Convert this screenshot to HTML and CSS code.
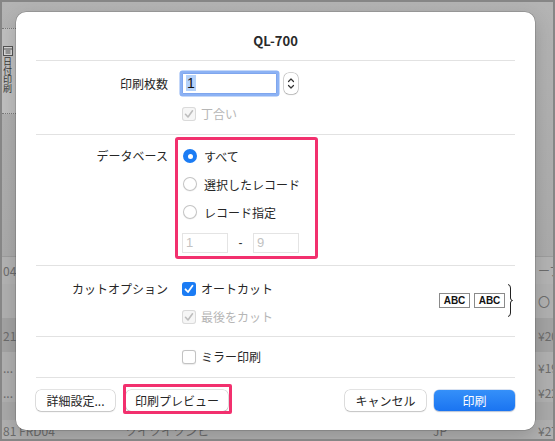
FILE: index.html
```html
<!DOCTYPE html>
<html lang="ja">
<head>
<meta charset="utf-8">
<title>QL-700</title>
<link rel="stylesheet" href="styles.css">
</head>
<body>
<div class="screen">
  <div class="bg">
    <div class="bg-top">
      <div class="bg-side">
        <div class="side-panel">
          <svg class="side-icon" width="10" height="10" viewBox="0 0 10 10"><rect x="0.5" y="0.5" width="9" height="9" fill="#d8d8d8" stroke="#555"/><path d="M0.5 3h9M2.5 5h5M2.5 7h5" stroke="#555" stroke-width="1"/></svg>
          <span class="vtext">日付印刷</span>
        </div>
      </div>
    </div>
    <div class="bg-row r1"><span>04</span><span></span><span></span><span>ープ</span></div>
    <div class="bg-row r2"><span></span><span></span><span></span><span>〇 会</span></div>
    <div class="bg-row r3"><span>21</span><span></span><span></span><span>¥20</span></div>
    <div class="bg-row r4"><span>...</span><span></span><span></span><span>¥19</span></div>
    <div class="bg-row r5"><span>...</span><span></span><span></span><span>¥22</span></div>
    <div class="bg-row r6"></div>
    <div class="bg-row r7"><span>81 FRD04</span><span>ツイツイツンヒ</span><span>JP</span><span>¥27</span></div>
  </div>

  <div class="dialog">
    <h1 class="title">QL-700</h1>

    <section class="sec sec-copies">
      <div class="label">印刷枚数</div>
      <div class="ctrl">
        <div class="copies">
          <div class="num-field"><span class="sel">1</span></div>
          <div class="stepper">
            <svg width="14" height="21" viewBox="0 0 14 21"><path d="M4.5 8.5 L7 6 L9.5 8.5" fill="none" stroke="#333" stroke-width="1.2" stroke-linecap="round" stroke-linejoin="round"/><path d="M4.5 12.5 L7 15 L9.5 12.5" fill="none" stroke="#333" stroke-width="1.2" stroke-linecap="round" stroke-linejoin="round"/></svg>
          </div>
        </div>
        <div class="check disabled">
          <span class="box on-dis"><svg width="14" height="14" viewBox="0 0 14 14"><path d="M3.5 7.3 L6 10 L10.5 3.8" fill="none" stroke="#bdbdbd" stroke-width="1.6" stroke-linecap="round" stroke-linejoin="round"/></svg></span>
          <span class="txt">丁合い</span>
        </div>
      </div>
    </section>

    <section class="sec sec-db">
      <div class="label">データベース</div>
      <div class="radio-group">
        <div class="radio"><span class="dot on"></span><span class="txt">すべて</span></div>
        <div class="radio"><span class="dot"></span><span class="txt">選択したレコード</span></div>
        <div class="radio"><span class="dot"></span><span class="txt">レコード指定</span></div>
        <div class="range">
          <span class="mini-field">1</span>
          <span class="dash">-</span>
          <span class="mini-field">9</span>
        </div>
      </div>
    </section>

    <section class="sec sec-cut">
      <div class="label">カットオプション</div>
      <div class="ctrl">
        <div class="check">
          <span class="box on"><svg width="14" height="14" viewBox="0 0 14 14"><path d="M3.5 7.3 L6 10 L10.5 3.8" fill="none" stroke="#fff" stroke-width="1.8" stroke-linecap="round" stroke-linejoin="round"/></svg></span>
          <span class="txt">オートカット</span>
        </div>
        <div class="check disabled">
          <span class="box on-dis"><svg width="14" height="14" viewBox="0 0 14 14"><path d="M3.5 7.3 L6 10 L10.5 3.8" fill="none" stroke="#bdbdbd" stroke-width="1.6" stroke-linecap="round" stroke-linejoin="round"/></svg></span>
          <span class="txt">最後をカット</span>
        </div>
      </div>
      <div class="illus">
        <span class="abc">ABC</span>
        <span class="abc">ABC</span>
        <svg class="brace" width="6" height="33" viewBox="0 0 6 33"><path d="M1 0.5 Q3.5 0.8 3.5 4 L3.5 14 Q3.5 16.3 5.5 16.5 Q3.5 16.7 3.5 19 L3.5 29 Q3.5 32.2 1 32.5" fill="none" stroke="#222" stroke-width="1"/></svg>
      </div>
    </section>

    <section class="sec sec-mirror">
      <div class="label"></div>
      <div class="ctrl">
        <div class="check">
          <span class="box"></span>
          <span class="txt">ミラー印刷</span>
        </div>
      </div>
    </section>

    <footer class="footer">
      <button class="btn btn-detail">詳細設定...</button>
      <button class="btn btn-preview">印刷プレビュー</button>
      <span class="spacer"></span>
      <button class="btn btn-cancel">キャンセル</button>
      <button class="btn btn-print">印刷</button>
    </footer>
  </div>
</div>
</body>
</html>
```

FILE: styles.css
```css
* { box-sizing: border-box; }
html, body { margin: 0; padding: 0; }
body {
  width: 555px;
  height: 441px;
  overflow: hidden;
  background: #858585;
  font-family: "Noto Sans CJK JP", "Noto Sans", sans-serif;
}

.screen {
  position: relative;
  width: 555px;
  height: 441px;
  border: 2px solid #868686;
  background: #adadad;
  overflow: hidden;
}

/* ---------- background window (dimmed) ---------- */
.bg {
  display: flex;
  flex-direction: column;
  height: 100%;
}
.bg-top {
  height: 254px;
  display: flex;
  background: linear-gradient(#b4b4b4, #ababab);
}
.bg-side {
  width: 14px;
  padding-top: 26px;
}
.side-panel {
  height: 86px;
  background: #c0c0c0;
  border-top: 1px dotted #7a7a7a;
  border-bottom: 1px dotted #7a7a7a;
  padding: 17px 0 0 1px;
  display: flex;
  flex-direction: column;
  align-items: flex-start;
  overflow: hidden;
}
.side-icon { display: block; }
.vtext {
  writing-mode: vertical-rl;
  font-size: 9px;
  line-height: 9px;
  color: #3a3a3a;
  margin-top: 1px;
}

.bg-row {
  display: grid;
  grid-template-columns: 122px 308px 105px 1fr;
  align-items: center;
  font-size: 12px;
  color: #6c6c6c;
  white-space: nowrap;
  overflow: hidden;
  background: #b0b0b0;
}
.bg-row span { padding-left: 1px; overflow: hidden; }
.r1 { height: 28px; border-top: 1px solid #9d9d9d; background: #b3b3b3; }
.r2 { height: 34px; }
.r3 { height: 34px; background: #a3a3a3; }
.r4 { height: 30px; }
.r5 { height: 20px; }
.r6 { height: 18px; background: #a9a9a9; }
.r7 { height: 19px; align-items: end; }

/* ---------- dialog ---------- */
.dialog {
  position: absolute;
  left: 14px;
  top: 10px;
  width: 519px;
  height: 418px;
  background: #ffffff;
  border-radius: 10px;
  box-shadow: 0 0 0 0.5px rgba(0,0,0,0.25), 0 6px 20px rgba(0,0,0,0.18);
  display: flex;
  flex-direction: column;
  color: #262626;
  font-size: 12px;
}

.title {
  margin: 0 20px;
  padding: 21px 0 11px;
  font-size: 13px;
  line-height: 16px;
  font-weight: bold;
  text-align: center;
  color: #2a2a2a;
  border-bottom: 1px solid #e2e2e2;
}

.sec {
  margin: 0 20px;
  display: grid;
  grid-template-columns: 132px 1fr;
  column-gap: 14px;
  border-bottom: 1px solid #e2e2e2;
}
.label {
  text-align: right;
  line-height: 18px;
  color: #262626;
}
.ctrl {
  display: flex;
  flex-direction: column;
  gap: 10px;
  align-items: flex-start;
}

/* copies */
.sec-copies { padding: 10px 0 12px; }
.sec-copies .label { line-height: 25px; }
.copies {
  height: 25px;
  display: flex;
  align-items: center;
}
.num-field {
  width: 95px;
  height: 21px;
  border: 1px solid #7fa6ee;
  box-shadow: 0 0 0 2.5px #8cb2f4;
  border-radius: 1px;
  background: #fff;
  padding: 2px 0 0 3px;
  font-family: "Liberation Sans", "Noto Sans", sans-serif;
  font-size: 14px;
  line-height: 15px;
  color: #111;
}
.sel { background: #b5d2fa; padding: 0 1px; }
.stepper {
  margin-left: 7px;
  width: 14px;
  height: 21px;
  border-radius: 5px;
  background: #fff;
  box-shadow: 0 0 0 0.5px rgba(0,0,0,0.3), 0 0.5px 1.5px rgba(0,0,0,0.2);
}
.stepper svg { display: block; }

/* checkbox */
.check {
  height: 16px;
  display: flex;
  align-items: center;
  gap: 5px;
}
.box {
  width: 14px;
  height: 14px;
  border-radius: 3px;
  background: #fff;
  box-shadow: inset 0 0 0 1px #c3c3c3, 0 0.5px 1px rgba(0,0,0,0.08);
  display: block;
}
.box svg { display: block; }
.box.on { background: #1b7cf4; box-shadow: none; }
.box.on-dis { background: #f6f6f6; box-shadow: inset 0 0 0 1px #dadada; }
.check .txt { line-height: 18px; }
.check.disabled .txt { color: #b6b6b6; }
.sec-cut .check, .sec-mirror .check { height: 18px; }

/* database */
.sec-db { padding: 12px 0 12px; }
.radio-group {
  position: relative;
  justify-self: start;
  width: 118px;
  display: flex;
  flex-direction: column;
  gap: 10px;
}
.radio-group::after {
  content: "";
  position: absolute;
  left: -7px;
  right: -18px;
  top: -10px;
  bottom: -6px;
  border: 3px solid #f2306e;
  border-radius: 3px;
  pointer-events: none;
}
.radio {
  height: 18px;
  display: flex;
  align-items: center;
  gap: 7px;
  padding-left: 1px;
  white-space: nowrap;
}
.dot {
  width: 14px;
  height: 14px;
  border-radius: 50%;
  background: #fff;
  box-shadow: inset 0 0 0 1px #c3c3c3, 0 0.5px 1px rgba(0,0,0,0.08);
  display: block;
  position: relative;
}
.dot.on { background: #1b7cf4; box-shadow: none; }
.dot.on::after {
  content: "";
  position: absolute;
  left: 4.5px;
  top: 4.5px;
  width: 5px;
  height: 5px;
  border-radius: 50%;
  background: #fff;
}
.range {
  margin-top: 2px;
  height: 20px;
  display: flex;
  align-items: center;
  gap: 10px;
}
.mini-field {
  width: 46px;
  height: 20px;
  border: 1px solid #e4e4e4;
  padding-left: 3px;
  font-family: "Liberation Sans", "Noto Sans", sans-serif;
  font-size: 13px;
  line-height: 18px;
  color: #c2c2c2;
}
.dash {
  width: 5px;
  font-family: "Liberation Sans", sans-serif;
  font-size: 12px;
  color: #333;
  text-align: center;
}

/* cut options */
.sec-cut {
  grid-template-columns: 132px 1fr auto;
  padding: 14px 0 10px;
}
.illus {
  align-self: start;
  margin: 4px 2px 0 0;
  height: 33px;
  display: flex;
  align-items: center;
  gap: 4px;
}
.abc {
  width: 31px;
  height: 15px;
  border: 1px solid #8a8a8a;
  font-family: "Liberation Sans", Arial, sans-serif;
  font-weight: bold;
  font-size: 10px;
  line-height: 13px;
  text-align: center;
  color: #111;
}
.brace { display: block; margin-left: -2px; }

/* mirror */
.sec-mirror { padding: 11px 0 11px; }

/* footer */
.footer {
  margin: 0 20px;
  padding-top: 12px;
  display: flex;
  align-items: flex-start;
}
.spacer { flex: 1; }
.btn {
  height: 21px;
  border: none;
  border-radius: 5px;
  background: #fff;
  box-shadow: 0 0 0 0.5px rgba(0,0,0,0.22), 0 1px 1.5px rgba(0,0,0,0.14);
  font-family: "Noto Sans CJK JP", "Noto Sans", sans-serif;
  font-size: 12px;
  line-height: 21px;
  color: #262626;
  padding: 0;
  text-align: center;
}
.btn-detail { width: 79px; }
.btn-preview { width: 102px; margin-left: 11px; position: relative; }
.btn-preview::after {
  content: "";
  position: absolute;
  left: -3px;
  right: -4px;
  top: -6px;
  bottom: -3px;
  border: 3px solid #f2306e;
  border-radius: 2px;
}
.btn-cancel { width: 81px; }
.btn-print {
  width: 81px;
  margin-left: 8px;
  background: linear-gradient(#3590f9, #1a74f1);
  color: #fff;
  box-shadow: 0 0 0 0.5px rgba(0,60,160,0.3), 0 1px 1.5px rgba(0,0,0,0.14);
}
```
